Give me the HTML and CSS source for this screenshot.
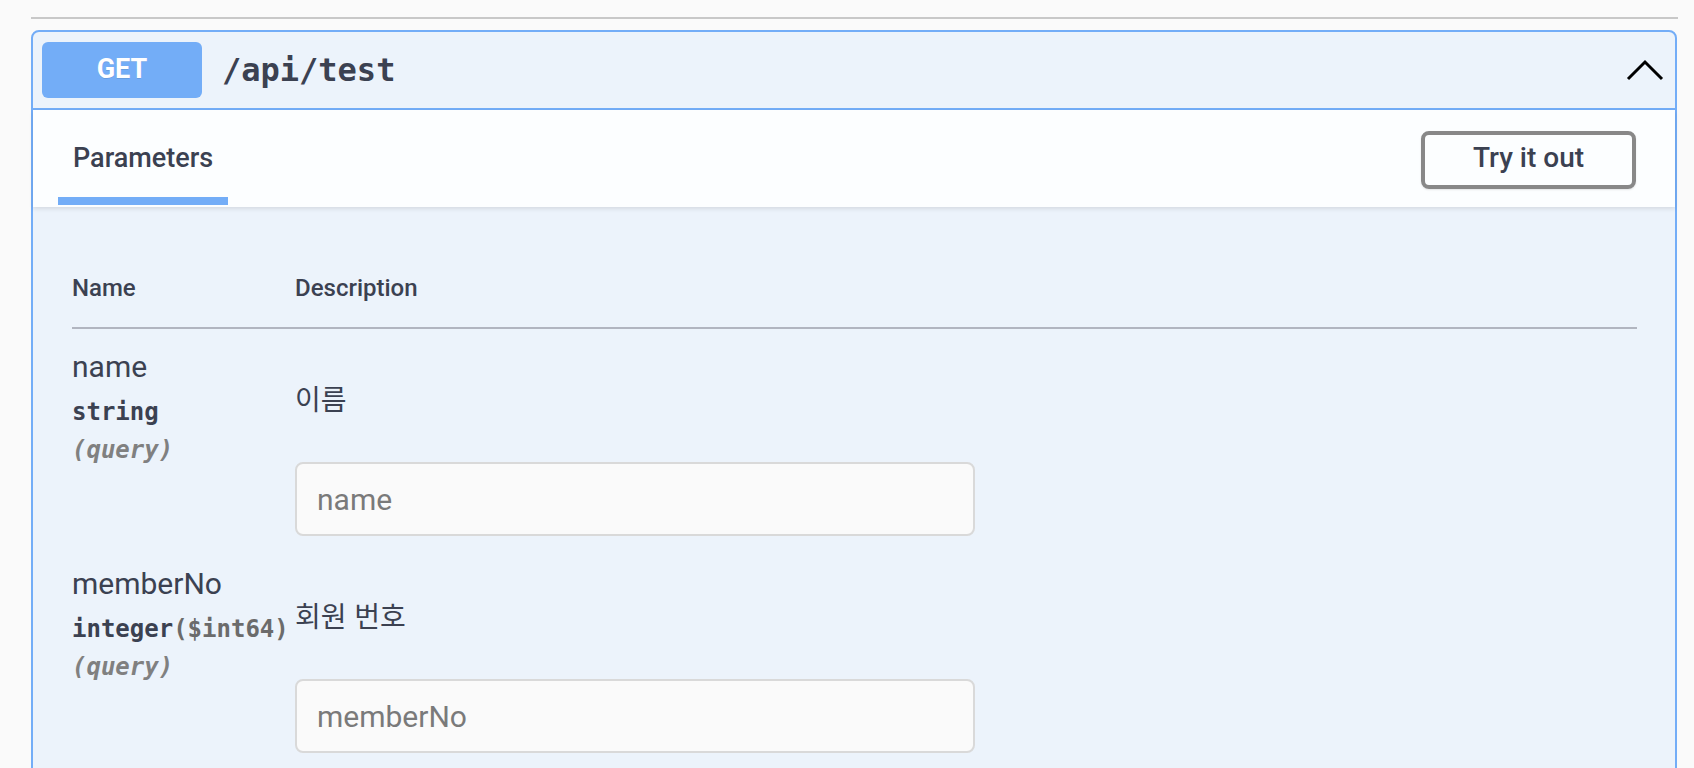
FILE: index.html
```html
<!DOCTYPE html>
<html lang="ko">
<head>
<meta charset="utf-8">
<title>Swagger</title>
<link rel="stylesheet" href="styles.css">
</head>
<body>
<div class="wrap">
  <div class="topline"></div>
  <div class="opblock">
    <div class="summary">
      <span class="method">GET</span>
      <span class="path">/api/test</span>
      <svg class="arrow" width="40" height="40" viewBox="0 0 40 40"><polyline points="3,29 20,12 37,29" fill="none" stroke="#000" stroke-width="3"/></svg>
    </div>
    <div class="section-header">
      <div class="tab">Parameters</div>
      <button class="try">Try it out</button>
    </div>
    <div class="params">
      <div class="row head">
        <div class="col-name">Name</div>
        <div class="col-desc">Description</div>
      </div>
      <div class="body">
        <div class="row param">
          <div class="col-name">
            <div class="pname">name</div>
            <div class="ptype">string</div>
            <div class="pin">(query)</div>
          </div>
          <div class="col-desc">
            <p class="md">이름</p>
            <input class="inp" type="text" placeholder="name">
          </div>
        </div>
        <div class="row param">
          <div class="col-name">
            <div class="pname">memberNo</div>
            <div class="ptype">integer<span class="fmt">($int64)</span></div>
            <div class="pin">(query)</div>
          </div>
          <div class="col-desc">
            <p class="md">회원 번호</p>
            <input class="inp" type="text" placeholder="memberNo">
          </div>
        </div>
      </div>
    </div>
  </div>
</div>
</body>
</html>
```

FILE: styles.css
```css
html, body {
  margin: 0;
  padding: 0;
  background: #fafafa;
  font-family: Roboto, "Noto Sans CJK KR", sans-serif;
  color: #3b4151;
  overflow: hidden;
}
.wrap {
  padding: 17px 17px 0 31px;
}
.topline {
  height: 2px;
  background: #c8c8c8;
  margin-right: -1px;
  margin-bottom: 11px;
}
.opblock {
  border: 2px solid #73adf7;
  border-radius: 8px;
  background: #ecf3fb;
  height: 1000px;
}
.summary {
  display: flex;
  align-items: center;
  padding: 10px 10px 10px 9px;
  border-bottom: 2px solid #73adf7;
}
.method {
  width: 160px;
  height: 56px;
  border-radius: 6px;
  background: #73adf7;
  color: #fff;
  font-weight: 700;
  font-size: 27px;
  display: flex;
  align-items: center;
  justify-content: center;
  padding-bottom: 3px;
  box-sizing: border-box;
  text-shadow: 0 1px 0 rgba(0,0,0,.1);
}
.path {
  margin-left: 20px;
  font-family: "DejaVu Sans Mono", monospace;
  font-weight: 700;
  font-size: 32px;
  color: #3b4151;
  flex: 1;
}
.arrow {
  display: block;
}
.section-header {
  display: flex;
  align-items: stretch;
  justify-content: space-between;
  height: 97px;
  padding: 0 39px 0 25px;
  background: rgba(255,255,255,.85);
  box-shadow: 0 2px 4px rgba(0,0,0,.1);
}
.tab {
  width: 170px;
  box-sizing: border-box;
  padding-left: 15px;
  display: flex;
  align-items: center;
  font-size: 27px;
  font-weight: 500;
  position: relative;
  padding-bottom: 2px;
}
.tab::after {
  content: "";
  position: absolute;
  left: 0;
  right: 0;
  bottom: 2px;
  height: 8px;
  background: #73adf7;
}
.try {
  align-self: flex-start;
  width: 215px;
  height: 58px;
  margin-top: 21px;
  border: 4px solid #888;
  border-radius: 8px;
  background: transparent;
  font-family: Roboto, "Noto Sans CJK KR", sans-serif;
  font-weight: 500;
  font-size: 28px;
  color: #3b4151;
  box-shadow: 0 1px 2px rgba(0,0,0,.1);
  padding: 0 0 5px;
}
.params {
  padding: 41px 38px 0 39px;
}
.row {
  display: grid;
  grid-template-columns: 223px 1fr;
}
.head {
  padding: 25px 0 24px;
  line-height: 30px;
  font-size: 24px;
  font-weight: 500;
  border-bottom: 2px solid #b1b5c0;
}
.body {
  padding-top: 19px;
}
.param + .param {
  margin-top: 29px;
}
.pname {
  font-size: 30px;
  line-height: 38px;
}
.ptype {
  font-family: "DejaVu Sans Mono", monospace;
  font-weight: 700;
  font-size: 24px;
  line-height: 30px;
  margin-top: 11px;
  white-space: nowrap;
}
.fmt {
  color: #6b6b6b;
}
.pin {
  font-family: "DejaVu Sans Mono", monospace;
  font-style: italic;
  font-weight: 700;
  font-size: 24px;
  line-height: 26px;
  margin-top: 10px;
  color: #808080;
}
.md {
  margin: 30px 0 0;
  font-family: "Noto Sans CJK KR", sans-serif;
  font-size: 28px;
  line-height: 40px;
}
.inp {
  display: block;
  margin-top: 44px;
  width: 680px;
  height: 74px;
  box-sizing: border-box;
  border: 2px solid #d9d9d9;
  border-radius: 8px;
  background: #fafafa;
  padding: 0 20px;
  font-family: Roboto, "Noto Sans CJK KR", sans-serif;
  font-size: 30px;
  color: #3b4151;
}
.inp::placeholder {
  color: #7a7a7a;
}
```
